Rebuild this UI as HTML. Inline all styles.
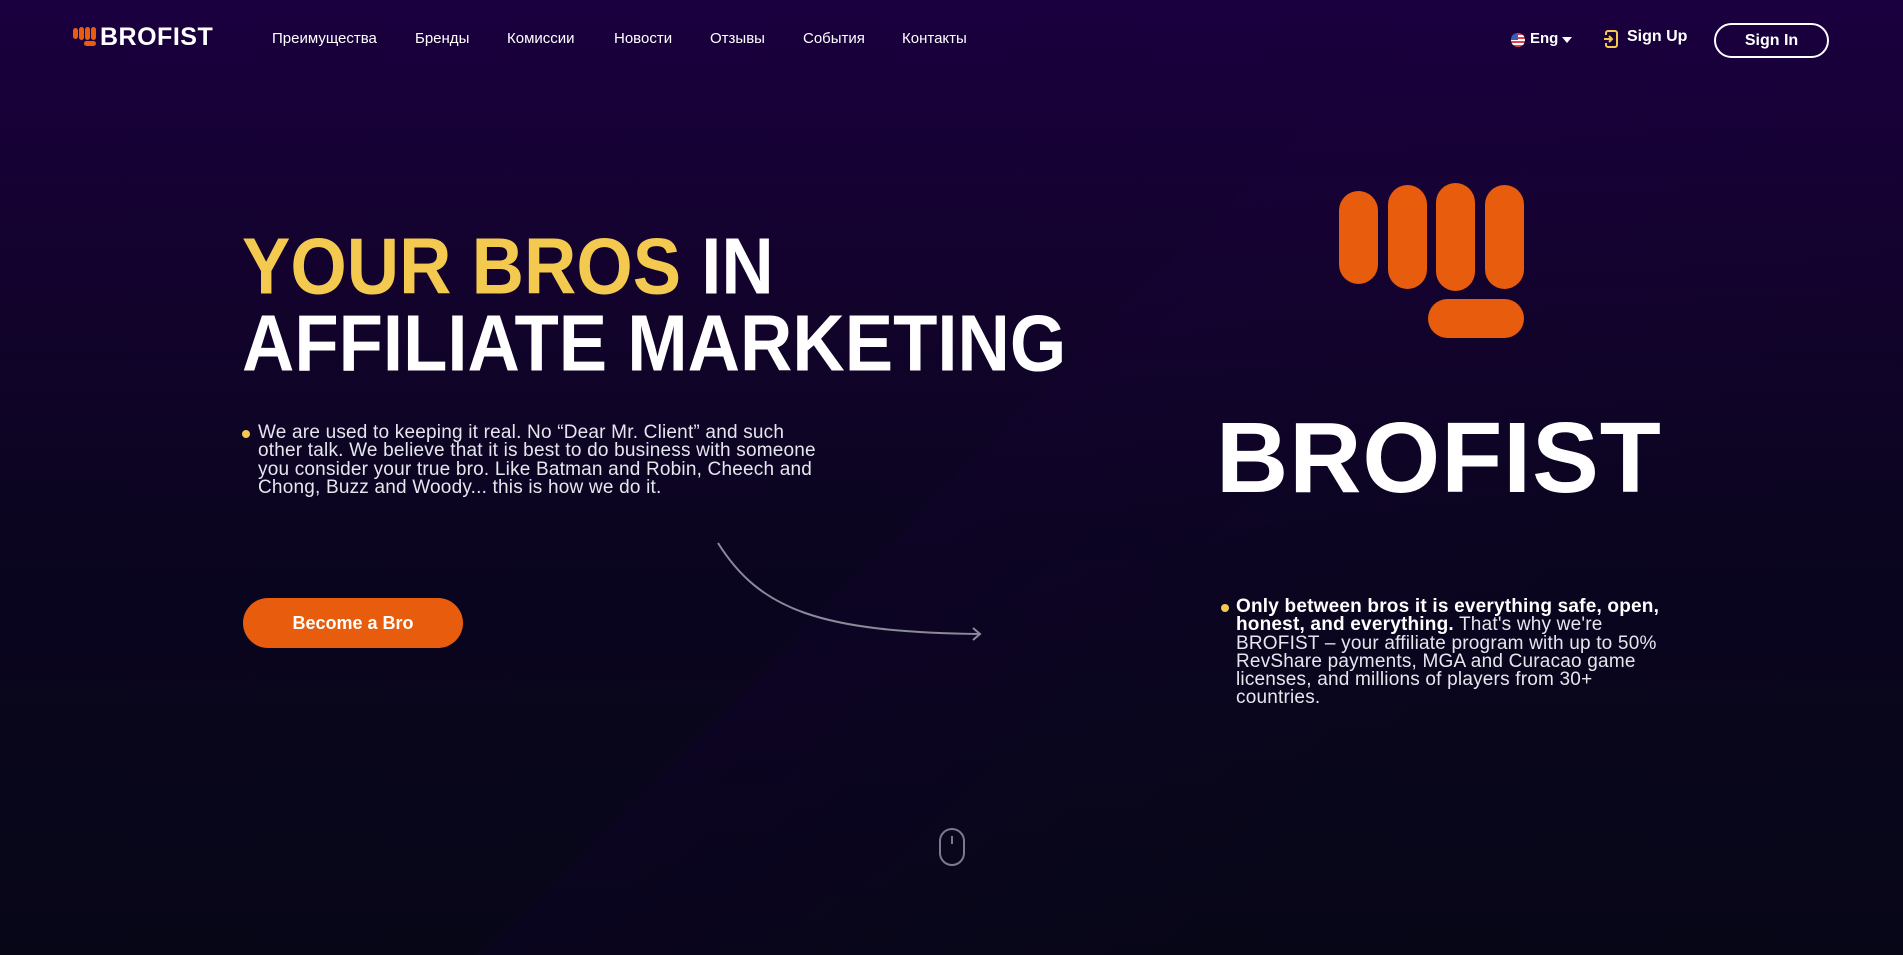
<!DOCTYPE html>
<html><head><meta charset="utf-8"><style>
*{margin:0;padding:0;box-sizing:border-box}
html,body{width:1903px;height:955px;overflow:hidden}
body{font-family:"Liberation Sans",sans-serif;color:#fff;position:relative;
background:linear-gradient(180deg,#1a003f 0%,#14022f 25%,#0b0520 55%,#070617 100%);}
.diag{position:absolute;inset:0;background:linear-gradient(135deg,rgba(0,0,0,0) 0%,rgba(0,0,0,0) 50%,rgba(25,0,60,0.18) 50.3%,rgba(0,0,0,0) 75%);}
.abs{position:absolute}
nav a{position:absolute;top:30px;font-size:15px;color:#fff;text-decoration:none}
.h1{font-weight:900;font-size:72.5px;line-height:78px;white-space:nowrap;transform:scaleY(1.1);transform-origin:left top}
.y{color:#f3c94f}
.dot{position:absolute;width:8px;height:8px;border-radius:50%;background:#f3c94f}
.p{font-size:19px;line-height:18.3px;color:#e6e6ee;letter-spacing:0.2px}
</style></head><body>
<div class="diag"></div>
<div class="abs" style="left:73px;top:27px;width:24px;height:21px">
<div class="abs" style="left:0;top:1px;width:5px;height:11px;border-radius:3px;background:#e85c0d"></div>
<div class="abs" style="left:6px;top:0;width:5px;height:13px;border-radius:3px;background:#e85c0d"></div>
<div class="abs" style="left:12px;top:0;width:5px;height:13px;border-radius:3px;background:#e85c0d"></div>
<div class="abs" style="left:18px;top:0;width:5px;height:13px;border-radius:3px;background:#e85c0d"></div>
<div class="abs" style="left:11px;top:14px;width:12px;height:5px;border-radius:3px;background:#e85c0d"></div>
</div>
<div class="abs" style="left:100px;top:23px;font-size:25px;font-weight:700;letter-spacing:0.5px">BROFIST</div>
<nav>
<a style="left:272px">Преимущества</a><a style="left:415px">Бренды</a><a style="left:507px">Комиссии</a><a style="left:614px">Новости</a><a style="left:710px">Отзывы</a><a style="left:803px">События</a><a style="left:902px">Контакты</a>
</nav>
<div class="abs" style="left:1511px;top:33px;width:14px;height:14px;border-radius:50%;background:repeating-linear-gradient(#e04050 0 2px,#fff 2px 4px)"><div style="width:7px;height:7px;background:#3b5bb5;border-radius:7px 0 0 0"></div></div>
<div class="abs" style="left:1530px;top:30px;font-size:15px;font-weight:700">Eng</div>
<div class="abs" style="left:1562px;top:37px;border-left:5px solid transparent;border-right:5px solid transparent;border-top:6px solid #fff"></div>
<svg class="abs" style="left:1603px;top:30px" width="16" height="18" viewBox="0 0 16 18"><path d="M3 5V3a2 2 0 0 1 2-2h7a2 2 0 0 1 2 2v12a2 2 0 0 1-2 2H5a2 2 0 0 1-2-2v-2" fill="none" stroke="#f3c94f" stroke-width="2"/><path d="M1 9h8M6 6l3 3-3 3" fill="none" stroke="#f3c94f" stroke-width="2"/></svg>
<div class="abs" style="left:1627px;top:28px;font-size:16px;font-weight:700">Sign Up</div>
<div class="abs" style="left:1714px;top:23px;width:115px;height:35px;border:2px solid #fff;border-radius:18px;text-align:center;line-height:31px;font-size:16px;font-weight:700">Sign In</div>
<div class="abs h1" style="left:242px;top:224px"><span class="y">YOUR BROS</span> IN</div>
<div class="abs h1" style="left:242px;top:301px">AFFILIATE MARKETING</div>
<div class="dot" style="left:242px;top:430px"></div>
<div class="abs p" style="left:258px;top:424px;width:570px">We are used to keeping it real. No “Dear Mr. Client” and such other talk. We believe that it is best to do business with someone you consider your true bro. Like Batman and Robin, Cheech and Chong, Buzz and Woody... this is how we do it.</div>
<div class="abs" style="left:243px;top:598px;width:220px;height:50px;border-radius:25px;background:#e85c0d;text-align:center;line-height:50px;font-size:18px;font-weight:700">Become a Bro</div>
<svg class="abs" style="left:0;top:0" width="1903" height="955"><path d="M718 543 C760 610 820 632 980 634" fill="none" stroke="#8a8a9a" stroke-width="2"/><path d="M973 628l7 6-7 6" fill="none" stroke="#8a8a9a" stroke-width="2"/>
<rect x="940" y="829" width="24" height="36" rx="12" fill="none" stroke="#7a7a8a" stroke-width="2"/><line x1="952" y1="836" x2="952" y2="844" stroke="#7a7a8a" stroke-width="2"/></svg>
<div class="abs" style="left:1339px;top:191px;width:39px;height:93px;border-radius:20px;background:#e85c0d"></div>
<div class="abs" style="left:1388px;top:185px;width:39px;height:104px;border-radius:20px;background:#e85c0d"></div>
<div class="abs" style="left:1436px;top:183px;width:39px;height:108px;border-radius:20px;background:#e85c0d"></div>
<div class="abs" style="left:1485px;top:185px;width:39px;height:104px;border-radius:20px;background:#e85c0d"></div>
<div class="abs" style="left:1428px;top:299px;width:96px;height:39px;border-radius:20px;background:#e85c0d"></div>
<div class="abs" style="left:1216px;top:403px;font-size:100px;font-weight:700;letter-spacing:1px;line-height:110px">BROFIST</div>
<div class="dot" style="left:1221px;top:604px"></div>
<div class="abs p" style="left:1236px;top:598px;width:432px">
<b style="color:#fff">Only between bros it is everything safe, open, honest, and everything.</b> That's why we're BROFIST – your affiliate program with up to 50% RevShare payments, MGA and Curacao game licenses, and millions of players from 30+ countries.</div>
</body></html>
